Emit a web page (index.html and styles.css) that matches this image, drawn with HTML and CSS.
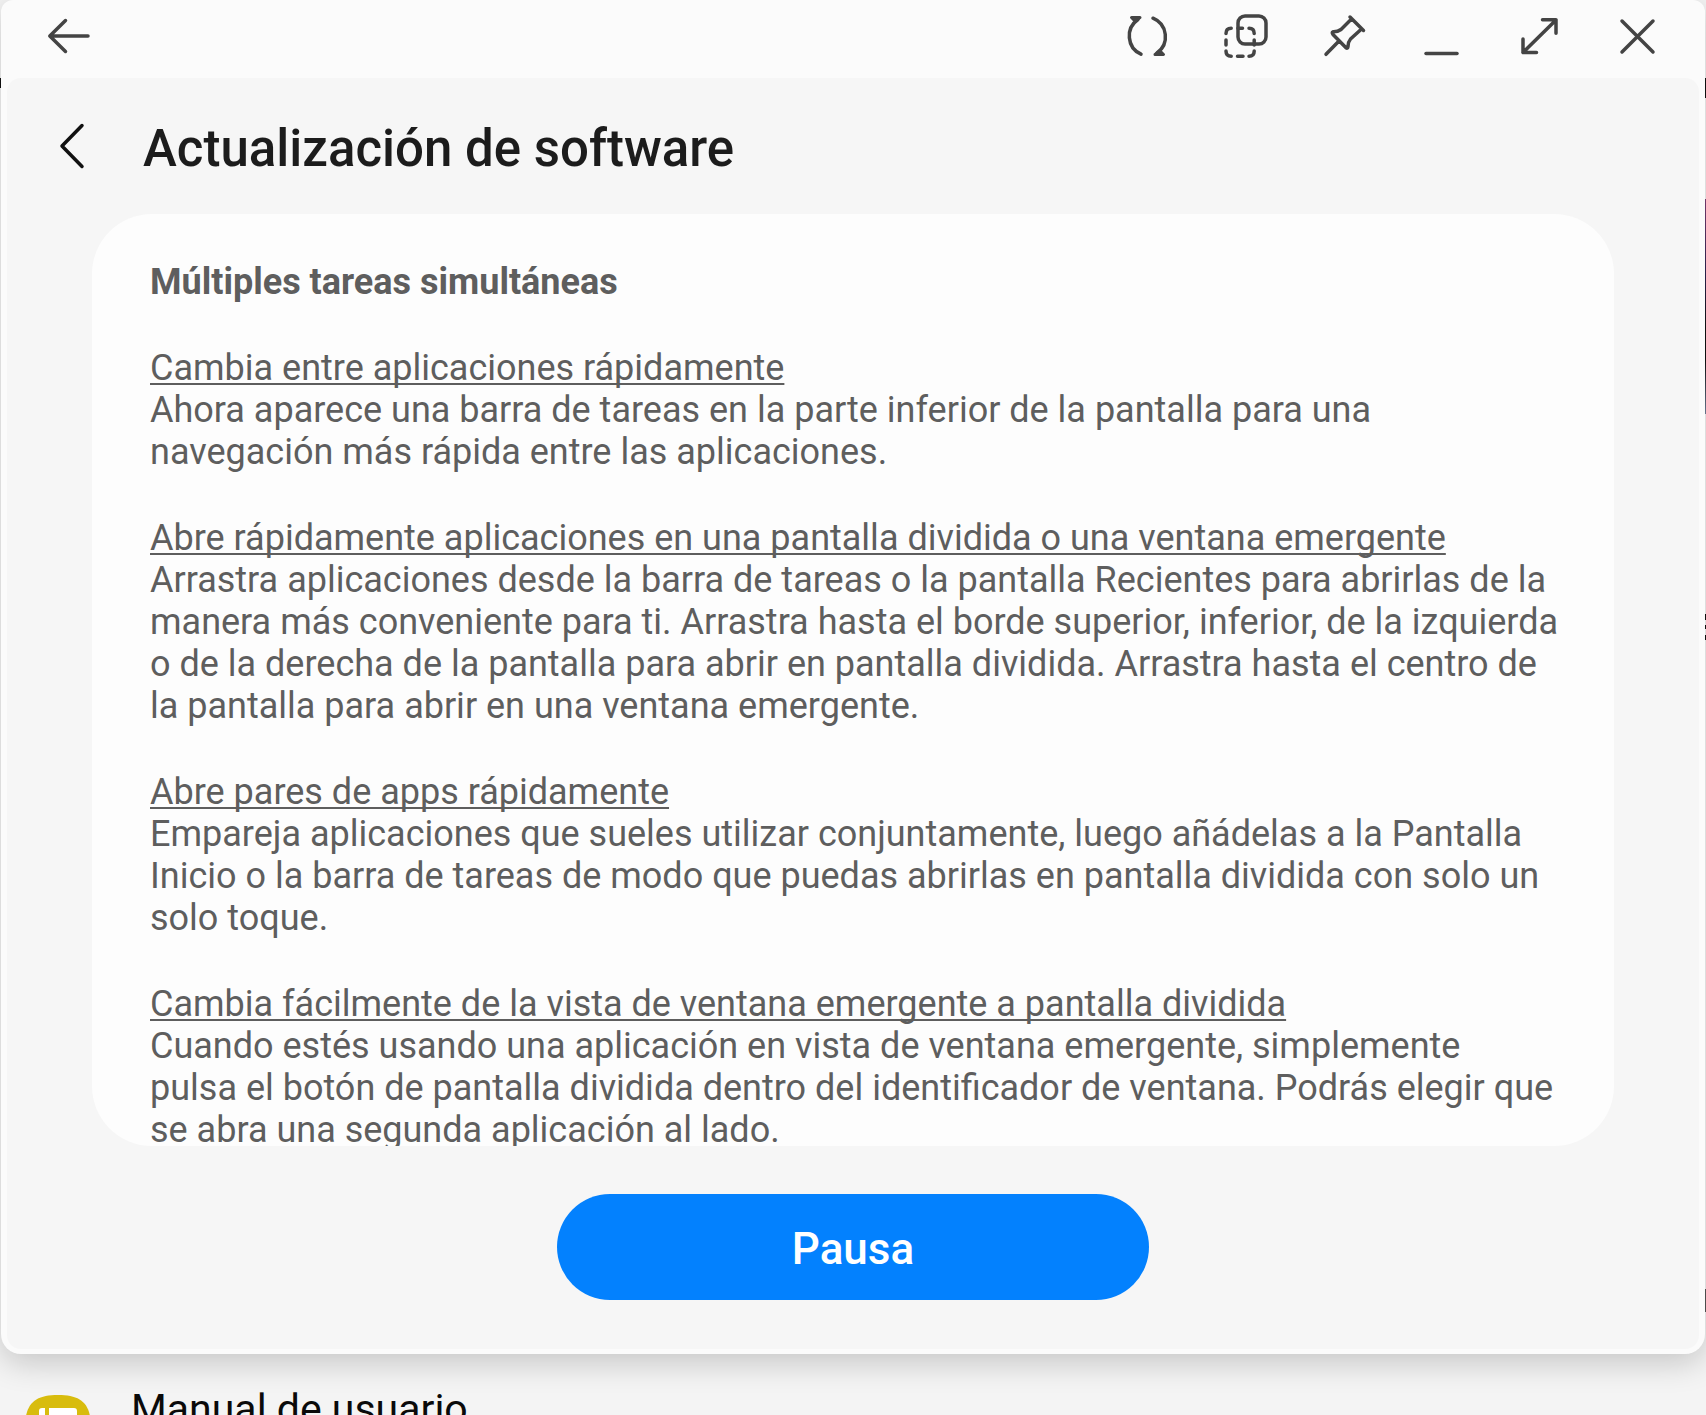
FILE: index.html
```
<!DOCTYPE html>
<html lang="es">
<head>
    <meta charset="utf-8" />
    <title>Actualización de software</title>
    <link rel="stylesheet" href="styles.css">
</head>
<body>
    <div class="stage">
        <div class="window">
            <header class="toolbar">
                <button type="button" class="tool" aria-label="Atrás">
                    <svg viewBox="0 0 48 48"><path d="M43 23H5M20.500 7.500L4.800 23l15.700 15.500" /></svg>
                </button>
                <div class="tools">
                    <button type="button" class="tool" aria-label="Girar">
                        <svg viewBox="0 0 48 48">
                            <path d="M18 41.200A20 20 0 0 1 15 6.500M30 5.200A20 20 0 0 1 34 40" />
                            <path class="solid" d="M8.500 4.500H17L12 8zM40.500 41.500H32L37 38z" />
                        </svg>
                    </button>
                    <button type="button" class="tool" aria-label="Pantalla dividida">
                        <svg viewBox="0 0 48 48">
                            <rect x="17" y="3" width="28" height="28" rx="7" />
                            <path d="M5 20.500Q5 15.300 10.200 15.300M17 15.300h4.500M28 15.300Q33.200 15.300 33.200 20.500M33.200 27v5M33.200 38Q33.200 43.300 28 43.300M22 43.300h-5.500M10.200 43.300Q5 43.300 5 38M5 32v-5" />
                        </svg>
                    </button>
                    <button type="button" class="tool" aria-label="Fijar">
                        <svg viewBox="0 0 48 48"><path d="M31 4l13.500 13.500M32.500 6L22 16.500Q18.500 19 14 18.800Q12.500 19.500 14 21.500L27 34.800Q28.700 36 29 33.500Q29 29 31.500 26L42.500 16M20 28L7 41.300" /></svg>
                    </button>
                    <button type="button" class="tool" aria-label="Minimizar">
                        <svg viewBox="0 0 48 48"><path d="M9 40.500h31" /></svg>
                    </button>
                    <button type="button" class="tool" aria-label="Maximizar">
                        <svg viewBox="0 0 48 48"><path d="M8 39.500L41 7M27.500 6.800H41v13.500M8 26v13.500h13.500" /></svg>
                    </button>
                    <button type="button" class="tool" aria-label="Cerrar">
                        <svg viewBox="0 0 48 48"><path d="M9 8l31 31M40 8L9 39" /></svg>
                    </button>
                </div>
            </header>

            <main class="content">
                <div class="heading">
                    <button type="button" class="up" aria-label="Volver">
                        <svg viewBox="0 0 48 48"><path d="M34 3.500L14 24l20 20.500" /></svg>
                    </button>
                    <h1>Actualización de software</h1>
                </div>

                <section class="card">
                    <h2>Múltiples tareas simultáneas</h2>

                    <h3>Cambia entre aplicaciones rápidamente</h3>
                    <p>Ahora aparece una barra de tareas en la parte inferior de la pantalla para una navegación más rápida entre las aplicaciones.</p>

                    <h3>Abre rápidamente aplicaciones en una pantalla dividida o una ventana emergente</h3>
                    <p>Arrastra aplicaciones desde la barra de tareas o la pantalla Recientes para abrirlas de la manera más conveniente para ti. Arrastra hasta el borde superior, inferior, de la izquierda o de la derecha de la pantalla para abrir en pantalla dividida. Arrastra hasta el centro de la pantalla para abrir en una ventana emergente.</p>

                    <h3>Abre pares de apps rápidamente</h3>
                    <p>Empareja aplicaciones que sueles utilizar conjuntamente, luego añádelas a la Pantalla Inicio o la barra de tareas de modo que puedas abrirlas en pantalla dividida con solo un solo toque.</p>

                    <h3>Cambia fácilmente de la vista de ventana emergente a pantalla dividida</h3>
                    <p>Cuando estés usando una aplicación en vista de ventana emergente, simplemente<br>pulsa el botón de pantalla dividida dentro del identificador de ventana. Podrás elegir que se abra una segunda aplicación al lado.</p>
                </section>

                <button type="button" class="pause">Pausa</button>
            </main>
        </div>

        <!-- lista de ajustes que queda detrás de la ventana -->
        <a href="#" class="row">
            <svg class="manual" viewBox="0 0 66 66">
                <path d="M33 0C56 0 66 8 66 33S56 66 33 66 0 58 0 33 10 0 33 0z" fill="#d8bc0d" />
                <path d="M20 13v38h-3q-3 0-3-3V16q0-3 3-3zM24 13h25q3 0 3 3v32q0 3-3 3H24z" fill="#fff" />
            </svg>
            <span>Manual de usuario</span>
        </a>
    </div>
</body>
</html>
```

FILE: styles.css
```
* {
    box-sizing: border-box;
    padding: 0;
    margin: 0;
}

body {
    font-family: Roboto, "Noto Sans", sans-serif;
    background-color: #f4f4f4;
}

button {
    border: none;
    background: none;
    font-family: inherit;
    cursor: pointer;
}

svg {
    display: block;
}

/* restos de la pantalla de atrás que asoman por los bordes */
.stage {
    display: flex;
    flex-direction: column;
    height: 100vh;
    padding: 0 1px;
    overflow: hidden;
    background-image:
        linear-gradient(#111, #111),
        linear-gradient(#111, #111),
        linear-gradient(#7d3f74, #2d2350 35%, #111 60%, #111 75%, #71809a),
        linear-gradient(#111 6px, transparent 6px, transparent 11px, #111 11px, #111 15px, transparent 15px, transparent 21px, #111 21px),
        linear-gradient(#555, #555);
    background-size: 1px 10px, 1px 20px, 1px 215px, 1px 26px, 1px 23px;
    background-position: 0 78px, 100% 78px, 100% 199px, 100% 614px, 100% 1289px;
    background-repeat: no-repeat;
}

.window {
    flex: 1;
    min-height: 0;
    display: flex;
    flex-direction: column;
    padding: 0 6px 5px;
    border-radius: 12px 12px 20px 20px;
    background-color: #fbfbfb;
    box-shadow: 0 8px 32px rgba(0, 0, 0, 0.2);
}

.toolbar {
    display: flex;
    justify-content: space-between;
    align-items: flex-start;
    height: 78px;
    padding: 13px 13px 0;
}

.tools {
    display: flex;
}

.tool {
    display: flex;
    justify-content: center;
    width: 98px;
    height: 48px;
}

.tool svg,
.up svg {
    width: 48px;
    height: 48px;
    fill: none;
    stroke: #444;
    stroke-width: 3.5;
    stroke-linecap: round;
    stroke-linejoin: round;
}

.tool .solid {
    fill: #444;
    stroke-width: 3;
}

.content {
    flex: 1;
    min-height: 0;
    display: flex;
    flex-direction: column;
    padding: 0 85px 49px;
    border-radius: 14px;
    background-color: #f6f6f6;
}

.heading {
    display: flex;
    align-items: center;
    gap: 47px;
    height: 136px;
    margin-left: -44px;
}

.up svg {
    stroke: #111;
}

h1 {
    padding-top: 5px;
    font-size: 51px;
    font-weight: 500;
    line-height: 60px;
    color: #1c1c1c;
}

.card {
    flex: 1;
    min-height: 0;
    padding: 47px 52px 0 58px;
    overflow: hidden;
    border-radius: 60px;
    background-color: #fdfdfd;
    font-size: 36px;
    line-height: 42px;
    color: #5e5e5e;
}

h2 {
    font-size: 36px;
    font-weight: 700;
}

h3 {
    margin-top: 44px;
    font-size: 36px;
    font-weight: 400;
    text-decoration: underline;
    text-decoration-thickness: 2px;
    text-decoration-skip-ink: none;
    text-underline-offset: 3px;
}

.pause {
    align-self: center;
    width: 592px;
    height: 106px;
    padding-top: 3px;
    margin-top: 48px;
    border-radius: 53px;
    background-color: #0381fe;
    font-size: 44px;
    font-weight: 500;
    color: #fff;
}

.row {
    display: flex;
    align-items: flex-start;
    gap: 40px;
    height: 61px;
    padding: 41px 24px 0;
    font-size: 41px;
    line-height: 40px;
    color: #0a0a0a;
    text-decoration: none;
}

.row span {
    margin-top: -6px;
}

.manual {
    width: 66px;
    height: 66px;
}
```
